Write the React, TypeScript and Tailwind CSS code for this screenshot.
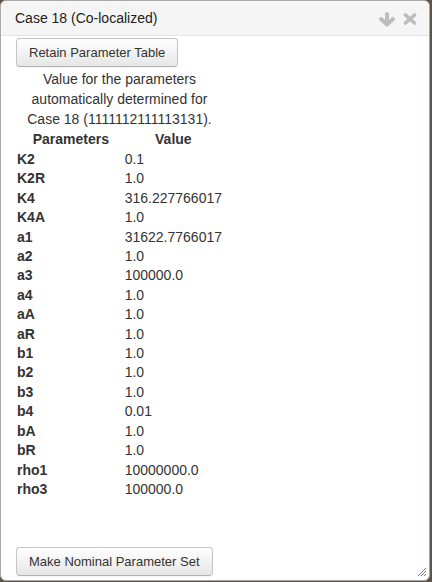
import React from "react";

const rows: [string, string][] = [
  ["K2", "0.1"],
  ["K2R", "1.0"],
  ["K4", "316.227766017"],
  ["K4A", "1.0"],
  ["a1", "31622.7766017"],
  ["a2", "1.0"],
  ["a3", "100000.0"],
  ["a4", "1.0"],
  ["aA", "1.0"],
  ["aR", "1.0"],
  ["b1", "1.0"],
  ["b2", "1.0"],
  ["b3", "1.0"],
  ["b4", "0.01"],
  ["bA", "1.0"],
  ["bR", "1.0"],
  ["rho1", "10000000.0"],
  ["rho3", "100000.0"],
];

const btn =
  "h-[29px] px-[12px] border border-[#c5c5c5] border-b-[#b3b3b3] rounded-[4px] bg-gradient-to-b from-white to-[#e6e6e6] shadow-[inset_0_1px_0_rgba(255,255,255,0.2),0_1px_2px_rgba(0,0,0,0.05)] text-[13px] text-[#333] leading-[20px]";

function ArrowDown() {
  return (
    <svg width="18" height="15" viewBox="0 0 18 15">
      <g stroke="#bdbdbd" strokeWidth="4" strokeLinecap="round" strokeLinejoin="round" fill="none">
        <line x1="9" y1="2" x2="9" y2="12" />
        <polyline points="3,7 9,12.5 15,7" />
      </g>
    </svg>
  );
}

function CloseIcon() {
  return (
    <svg width="14" height="12" viewBox="0 0 14 12">
      <g stroke="#bdbdbd" strokeWidth="3.6" strokeLinecap="round" fill="none">
        <line x1="2.5" y1="2" x2="11.5" y2="10" />
        <line x1="11.5" y1="2" x2="2.5" y2="10" />
      </g>
    </svg>
  );
}

export default function App() {
  return (
    <div className="w-[432px] h-[582px] bg-[#5e5348] font-['Liberation_Sans',Arial,sans-serif] text-[#333]">
      <div className="relative w-[430px] h-[581px] bg-white border border-[#a9a9a9] rounded-[6px] overflow-hidden flex flex-col">
        {/* header */}
        <div className="h-[35px] shrink-0 bg-[#f5f5f5] border-b border-[#e5e5e5] flex items-center justify-between pl-[14px] pr-[12px]">
          <span className="text-[14px] text-[#222] leading-[20px]">Case 18 (Co-localized)</span>
          <div className="flex items-center gap-[7px] pt-[2px]">
            <ArrowDown />
            <CloseIcon />
          </div>
        </div>

        {/* body */}
        <div className="flex-1 flex flex-col items-start px-[15px] pt-[2px] pb-[4px]">
          <button className={btn}>Retain Parameter Table</button>

          <table className="mt-[2px] ml-[1px] w-[205px] border-collapse text-[14px]">
            <caption className="leading-[20px] text-center">
              Value for the parameters
              <br />
              automatically determined for
              <br />
              Case 18 (1111112111113131).
            </caption>
            <thead>
              <tr className="h-[21px] leading-[21px]">
                <th className="w-[109px] p-0 text-center font-bold">Parameters</th>
                <th className="p-0 text-center font-bold">Value</th>
              </tr>
            </thead>
            <tbody>
              {rows.map(([k, v]) => (
                <tr key={k} className="h-[19.4px] leading-[19.4px]">
                  <td className="p-0 font-bold">{k}</td>
                  <td className="p-0">{v}</td>
                </tr>
              ))}
            </tbody>
          </table>

          <button className={`${btn} mt-auto`}>Make Nominal Parameter Set</button>
        </div>

        {/* resize grip */}
        <svg className="absolute right-[3px] bottom-[4px]" width="9" height="9" viewBox="0 0 9 9">
          <g stroke="#777" strokeWidth="1">
            <line x1="1" y1="9" x2="9" y2="1" />
            <line x1="4" y1="9" x2="9" y2="4" />
            <line x1="7" y1="9" x2="9" y2="7" />
          </g>
        </svg>
      </div>
    </div>
  );
}
